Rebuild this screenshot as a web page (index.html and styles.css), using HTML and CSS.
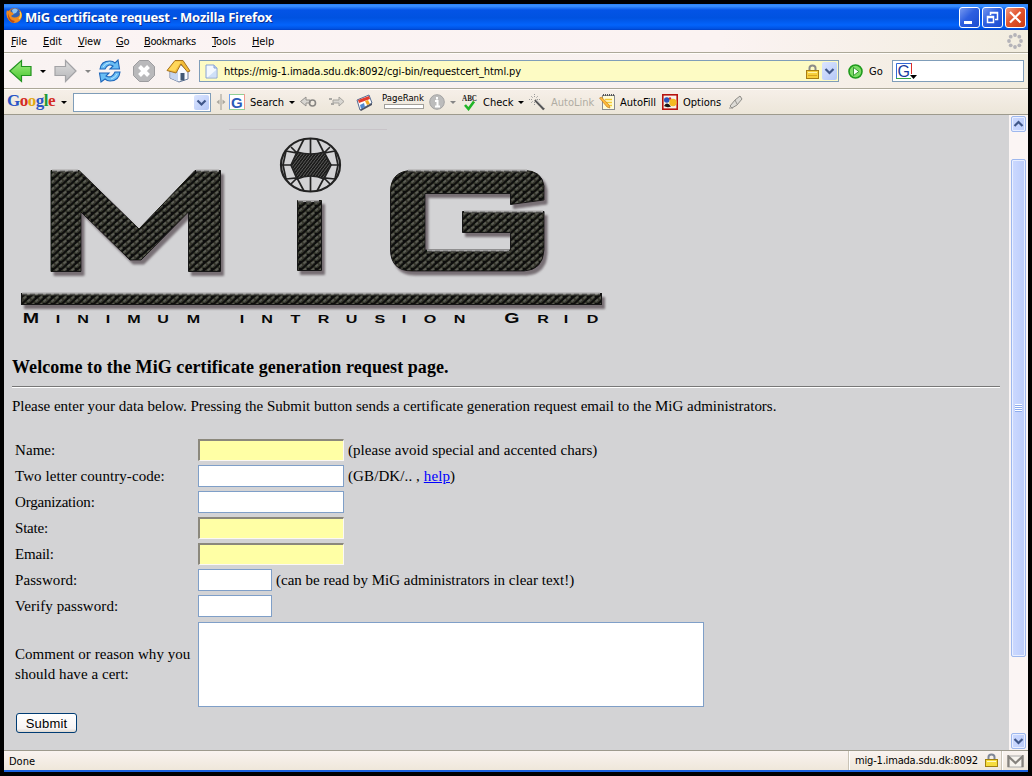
FILE: index.html
```html
<!DOCTYPE html>
<html lang="en">
<head>
<meta charset="utf-8">
<title>MiG certificate request - Mozilla Firefox</title>
<link rel="stylesheet" href="styles.css">
</head>
<body>
<div class="window">
  <header class="titlebar">
    <svg class="fox" width="17" height="17" viewBox="0 0 17 17"><circle cx="8.5" cy="8.5" r="7.5" fill="#e07820"/><circle cx="9" cy="6.6" r="5.4" fill="#2f62b5"/><path d="M6 3Q9 0 12 3L10 6L7 7Z" fill="#8fc4ee"/><path d="M1 3Q2 5 4 4Q7 6 8 7L5 9Q8 12 13 9Q15 6 13 2Q18 8 14 13Q8 18 3 13Q-1 9 1 3Z" fill="#f08a1d"/><path d="M2 6Q3 13 9 14L7 16Q1 13 2 6Z" fill="#b94b16"/><path d="M14 5Q16 9 13 12" stroke="#ffd34a" stroke-width="1.3" fill="none"/></svg>
    <span class="title-text">MiG certificate request - Mozilla Firefox</span>
    <div class="controls">
      <span class="ctl"><svg width="21" height="21"><rect x="5" y="14" width="8" height="3" fill="#fff"/></svg></span>
      <span class="ctl"><svg width="21" height="21"><path d="M8.5 8V5.5H15.5V12.5H13M8 6H16M5.5 9.5H11.500V15.500H5.500ZM5 10.500H12" fill="none" stroke="#fff" stroke-width="1.500"/></svg></span>
      <span class="ctl close"><svg width="21" height="21"><path d="M5 5L15.500 15.500M15.500 5L5 15.500" stroke="#fff" stroke-width="2.200"/></svg></span>
    </div>
  </header>

  <nav class="menubar">
    <span class="m-file"><u>F</u>ile</span><span class="m-edit"><u>E</u>dit</span><span class="m-view"><u>V</u>iew</span><span class="m-go"><u>G</u>o</span><span class="m-book"><u>B</u>ookmarks</span><span class="m-tools"><u>T</u>ools</span><span class="m-help"><u>H</u>elp</span>
    <svg class="throbber" width="16" height="16" viewBox="0 0 16 16"><g fill="#b4b3b8"><circle cx="8" cy="2" r="1.900"/><circle cx="12.300" cy="3.700" r="1.900"/><circle cx="14" cy="8" r="1.900"/><circle cx="12.300" cy="12.300" r="1.900"/><circle cx="8" cy="14" r="1.900"/><circle cx="3.700" cy="12.300" r="1.900"/><circle cx="2" cy="8" r="1.900"/><circle cx="3.700" cy="3.700" r="1.900"/></g></svg>
  </nav>

  <div class="navbar">
    <span class="n-back"><svg width="24" height="24"><defs><linearGradient id="gr" x2="0" y2="1"><stop offset="0" stop-color="#a5ee86"/><stop offset="1" stop-color="#42c529"/></linearGradient><linearGradient id="gy" x2="0" y2="1"><stop offset="0" stop-color="#dedede"/><stop offset="1" stop-color="#b5b5b8"/></linearGradient></defs><path d="M.8 12L12.500 1.500V7.500H22V16.500H12.500V22.500Z" fill="url(#gr)" stroke="#239320" stroke-width="1.200"/></svg></span>
    <span class="n-caret"><i class="caret"></i></span>
    <span class="n-fwd"><svg width="24" height="24"><path d="M22 12L11.500 1.500V7.500H1V16.500H11.500V22.500Z" fill="url(#gy)" stroke="#a3a3a6" stroke-width="1.200"/></svg></span>
    <span class="n-caret2"><i class="caret grey"></i></span>
    <span class="n-reload"><svg width="24" height="24"><g fill="#69bdf4" stroke="#1c65ba" stroke-width="1.100"><path d="M2 10Q3 2 12 2Q15 2 17 4L20 1L21.500 10H12L15 7Q10 4 7 10Z"/><path d="M22 13Q21 22 12 22Q9 22 7 20L3 23L1.500 14H11L8 17Q14 20 17 13Z"/></g><path d="M5 8Q7 4 12 3.500M19 15Q17 19 13 20" stroke="#b9e6ff" fill="none"/></svg></span>
    <span class="n-stop"><svg width="24" height="24"><path d="M7.500 1.500H16.500L22.500 7.500V16.500L16.500 22.500H7.500L1.500 16.500V7.500Z" fill="#b9b9bb" stroke="#9c9c9f"/><path d="M7.500 7.500L16.500 16.500M16.500 7.500L7.500 16.500" stroke="#fff" stroke-width="4"/></svg></span>
    <span class="n-home"><svg width="26" height="24"><path d="M4 12L14 5L22 12V20L13 23L4 19Z" fill="#f8faff" stroke="#6b7d9e"/><path d="M4.500 12L12 10V22.500L4.500 19Z" fill="#c6d5ee"/><path d="M1 11.500L9 1.500H17L24 12L21.500 13L15 5L10 14Z" fill="#f2bc38" stroke="#a6721e"/><path d="M9 2.500H15L9 12L2.500 11Z" fill="#ffd75b"/><rect x="14.500" y="14" width="4" height="7.500" fill="#415875"/></svg></span>
    <div class="urlbar">
      <svg class="page" width="13" height="15"><path d="M1 1H9L12 4V14H1Z" fill="#f3f8ff" stroke="#87a3d4"/><path d="M9 1V4H12" fill="#c2d3f0" stroke="#87a3d4"/><path d="M3 13L11 6V13Z" fill="#cfe0f8"/></svg>
      <span class="url">https://mig-1.imada.sdu.dk:8092/cgi-bin/requestcert_html.py</span>
      <svg width="13" height="15" class="lock"><path d="M3.500 7V4Q3.500 1.500 6.500 1.500T9.500 4V7" fill="none" stroke="#8b8b88" stroke-width="2"/><rect x=".5" y="6.500" width="12" height="8" fill="#f6cf3c" stroke="#a77c13"/><path d="M2 8.500H11" stroke="#fff2a4"/><path d="M2 11.500H11" stroke="#d9a51e"/></svg>
      <span class="drop"><svg width="15" height="18"><path d="M3.500 7L7.500 11L11.500 7" fill="none" stroke="#405789" stroke-width="2.200"/></svg></span>
    </div>
    <span class="n-goicon"><svg width="15" height="15"><circle cx="7.500" cy="7.500" r="6.500" fill="#7cdc67" stroke="#1f9a1c" stroke-width="1.600"/><path d="M5.500 3.500V11.500L10.800 7.500Z" fill="#fff" stroke="#168217" stroke-width=".8"/></svg></span>
    <span class="n-go">Go</span>
    <div class="searchbox"><svg width="24" height="20"><rect x="1.500" y="2" width="15" height="15" fill="#fff"/><path d="M1.500 17V2.500H16" fill="none" stroke="#3269d6"/><path d="M1 17.500H16" stroke="#34a642"/><path d="M16.500 2V13" stroke="#dd2f2a"/><text x="2.500" y="15.500" class="gletter">G</text><path d="M15 14H22L18.500 18Z" fill="#000"/></svg></div>
  </div>

  <div class="googlebar">
    <span class="g-logo"><b class="c-blue">G</b><b class="c-red">o</b><b class="c-yel">o</b><b class="c-blue">g</b><b class="c-grn">l</b><b class="c-red">e</b></span>
    <span class="g-c1"><i class="caret"></i></span>
    <div class="g-input"><span class="drop"><svg width="15" height="15"><path d="M3.500 5.500L7.500 9.500L11.500 5.500" fill="none" stroke="#405789" stroke-width="2.200"/></svg></span></div>
    <span class="g-handle"><svg width="10" height="16"><path d="M5 0V16" stroke="#9c9a91"/><path d="M3.500 5.500V10.500L.5 8ZM6.500 5.500V10.500L9.500 8Z" fill="#aaa79e"/></svg></span>
    <span class="g-g"><svg width="16" height="16"><rect x=".5" y=".5" width="15" height="15" fill="#fff" stroke="#8fcf95"/><path d="M.5 0V15" stroke="#6c9ff0"/><path d="M15.500 0V15" stroke="#f09a90"/><text x="2" y="14" class="gletter bold">G</text></svg></span>
    <span class="g-search txt">Search</span>
    <span class="g-c2"><i class="caret"></i></span>
    <span class="g-prev"><svg width="17" height="12"><path d="M.5 5.500L6 1V4H10V7H6V10Z" fill="#d8d6d1" stroke="#94928e"/><circle cx="12.500" cy="7" r="3" fill="none" stroke="#888683" stroke-width="1.600"/></svg></span>
    <span class="g-next"><svg width="17" height="12"><path d="M16 5.500L11 1V4H5V7H11V10Z" fill="#d8d6d1" stroke="#a5a39e"/><path d="M1 3H4M3 8H6" stroke="#aaa8a4" stroke-width="2"/></svg></span>
    <span class="g-news"><svg width="17" height="17"><path d="M1 6L13 1L16 9L4 16Z" fill="#fff" stroke="#546b92"/><path d="M2 6L13 2L14 5L3 9Z" fill="#e33b2c"/><path d="M4 11L8 9L9 13L5 15Z" fill="#5289cf"/><path d="M9 7L12 6L14 10L11 11Z" fill="#f2aa25"/><path d="M4 16L16 9V11L5 17Z" fill="#4c5361"/></svg></span>
    <span class="g-rank"><em>PageRank</em><i></i></span>
    <span class="g-info"><svg width="16" height="16"><circle cx="8" cy="8" r="7.300" fill="#bcbcbc" stroke="#a3a3a3"/><path d="M8 3V5.500M6 7H8.500V12M6 12.500H11" stroke="#fff" stroke-width="2" fill="none"/></svg></span>
    <span class="g-c3"><i class="caret grey"></i></span>
    <span class="g-abc"><svg width="17" height="17"><text x="0" y="6.500" class="abc" textLength="15" lengthAdjust="spacingAndGlyphs">ABC</text><path d="M3 11L6.500 15L12 7.500" fill="none" stroke="#20b527" stroke-width="2.600"/></svg></span>
    <span class="g-check txt">Check</span>
    <span class="g-c4"><i class="caret"></i></span>
    <span class="g-wand"><svg width="17" height="17"><path d="M6 6L15 15.500" stroke="#555" stroke-width="2.400"/><path d="M7 6L15 14" stroke="#aaa"/><path d="M5.500 0V3M5.500 8V11M0 5.500H3M8 5.500H11M2 2L4 4M9 2L7 4M2 9L4 7" stroke="#999" stroke-dasharray="1 1"/></svg></span>
    <span class="g-auto txt">AutoLink</span>
    <span class="g-fillicon"><svg width="17" height="17"><rect x="3.500" y="1.500" width="12" height="14" fill="#fffbd7" stroke="#888b91"/><path d="M4 1H16" stroke="#555" stroke-dasharray="1 1" stroke-width="2"/><path d="M6 5.500H13M7 8.500H13M8 11.500H13" stroke="#f2ca35" stroke-width="1.600"/><path d="M.5 4L2.500 3L10 11L11 14L8 13Z" fill="#ffb938" stroke="#bb731b" stroke-width=".6"/></svg></span>
    <span class="g-fill txt">AutoFill</span>
    <span class="g-opticon"><svg width="16" height="16"><rect x=".8" y=".8" width="14.400" height="14.400" fill="#f8f2ea" stroke="#b7130e" stroke-width="1.600"/><path d="M2 12Q5 7 9 12.500Q5 14 2 12Z" fill="#171717"/><circle cx="4.800" cy="6" r="2.800" fill="#2a55bc"/><circle cx="11" cy="8.500" r="3.700" fill="#f4bb22"/><circle cx="8" cy="4.500" r="1.200" fill="#dc321f"/></svg></span>
    <span class="g-opt txt">Options</span>
    <span class="g-pen"><svg width="16" height="15"><path d="M2 11L7 5L12 1L14 4L9 10L4 13Z" fill="#dddbd6" stroke="#8e8c87"/><path d="M7 5L9 9M1 13H5" stroke="#96948f"/></svg></span>
  </div>

  <div class="viewport">
    <main class="page-body">
      <svg class="logo" width="600" height="230" viewBox="12 115 600 230">
        <defs>
          <pattern id="weave" width="8" height="7" patternUnits="userSpaceOnUse" patternTransform="translate(51 170)"><rect width="8" height="7" fill="#0f100d"/><path d="M-2 8.500L4 3.500M2 5L10 -2M6 8.500L12 3.500" stroke="#33342c" stroke-width="3.200"/><path d="M.5 5.500L3 3.500M4.500 2.500L7 .5" stroke="#5c5d54" stroke-width="1.800"/></pattern>
          <pattern id="fine" width="3" height="4" patternUnits="userSpaceOnUse"><rect width="3" height="4" fill="#1d1d1c"/><path d="M0 4L3 0" stroke="#6b6b69" stroke-width=".8"/></pattern>
          <filter id="shade" x="-10%" y="-10%" width="125%" height="150%"><feDropShadow dx="3" dy="4" stdDeviation="1.300" flood-color="#60575b" flood-opacity=".8"/></filter>
        </defs>
        <path d="M229 129.500H387" stroke="#c8c3c8"/>
        <g filter="url(#shade)" fill="url(#weave)" stroke="#151512" stroke-width="1">
          <path d="M51 170.500H79L139 229L195 170.500H220.500V271.500H188.500V212L141 260H130L81 212V271.500H51Z"/>
          <path d="M297.500 200.500H321.500V270.500H297.500Z"/>
          <path d="M544 200V186Q542 170.500 524 170.500H412Q390.500 171 390.500 192V250Q391 271 412 271H524Q543 270 544 250V211.500H462.500V232.500H510.500V250H425V193.500H510.500V204.500Z"/>
          <rect x="21.500" y="293.500" width="580" height="11"/>
        </g>
        <path d="M52 170.500H78M196 170.500H219M298 201H319M408 170.500H527M464 211.500H543M427 250.500H509M22 293.500H600" stroke="#a9a8a8" stroke-width="2"/>
        <path d="M52 171.500H78M196 171.500H219M298 202H319M408 171.500H527M464 212.500H543M427 251.500H509M22 294.500H600" stroke="#4e4e4b" stroke-width="1.500" stroke-dasharray="5 3"/>
        <g stroke="#222" fill="none" stroke-width="1.700">
          <ellipse cx="310.500" cy="165" rx="29.500" ry="26.500" stroke-width="2.200"/>
          <path d="M310.500 138V192M281 165H340M304 139L297 153L286 151M317 139L324 153L335 151M304 191L297 178L286 179M317 191L324 178L335 179M286 151L283 165L286 179M335 151L338 165L335 179M291 147L297 153M330 147L324 153M291 184L297 178M330 184L324 178"/>
          <path d="M291 165L297 152Q311 156 324 152L331 165L324 179Q311 173 297 179Z" fill="url(#fine)"/>
        </g>
        <g class="tagline" transform="scale(1.400 1)">
          <text y="323" x="22.100 41.400 59.300 77.100 95.700 116.400 138.200 150 172.900 190.700 211.100 231.100 251.100 271.400 288.600 307.100 328.200 345 365.700 387.900 404.300 423.200"><tspan class="cap">M</tspan>INIMUM INTRUSION <tspan class="cap">G</tspan>RID</text>
        </g>
      </svg>
      <h3>Welcome to the MiG certificate generation request page.</h3>
      <hr>
      <p>Please enter your data below. Pressing the Submit button sends a certificate generation request email to the MiG administrators.</p>
      <form class="form">
        <label>Name:</label><div><input class="yellow"><span>(please avoid special and accented chars)</span></div>
        <label>Two letter country-code:</label><div><input><span class="code">(GB/DK/.. , <a href="#">help</a>)</span></div>
        <label class="tight">Organization:</label><div><input></div>
        <label class="tight">State:</label><div><input class="yellow"></div>
        <label class="tight">Email:</label><div><input class="yellow"></div>
        <label>Password:</label><div><input class="short" type="password"><span class="clear">(can be read by MiG administrators in clear text!)</span></div>
        <label>Verify password:</label><div><input class="short" type="password"></div>
        <label class="comment">Comment or reason why you<br>should have a cert:</label><textarea></textarea>
      </form>
      <button class="submit" type="button">Submit</button>
    </main>
    <div class="scrollbar">
      <span class="sb-btn"><svg width="15" height="16"><path d="M3.500 10L7.500 6L11.500 10" fill="none" stroke="#405789" stroke-width="2.200"/></svg></span>
      <span class="thumb"><i></i></span>
      <span class="sb-btn"><svg width="15" height="16"><path d="M3.500 6L7.500 10L11.500 6" fill="none" stroke="#405789" stroke-width="2.200"/></svg></span>
    </div>
  </div>

  <footer class="statusbar">
    <span class="done">Done</span>
    <span class="host"><span>mig-1.imada.sdu.dk:8092</span><svg width="13" height="15"><path d="M3.500 7V4Q3.500 1.500 6.500 1.500T9.500 4V7" fill="none" stroke="#7f8797" stroke-width="2"/><rect x=".5" y="6.500" width="12" height="7" fill="#f6dc3c" stroke="#a08010"/><path d="M2 8.500H11" stroke="#fffac0"/></svg></span>
    <span class="mail"><svg width="17" height="13"><rect x="1" y="1" width="15" height="11" fill="#f6f3ee" stroke="#aaa"/><path d="M1.500 12V1.500L8.500 8L15.500 1.500V12" fill="none" stroke="#85827d" stroke-width="2.200"/></svg></span>
  </footer>
</div>
</body>
</html>
```
FILE: styles.css
```css
* { box-sizing: border-box; }
body { margin: 0; background: #000; font: 11px/14px "DejaVu Sans Condensed", "DejaVu Sans", sans-serif; font-stretch: condensed; color: #000; overflow: hidden; }
svg { display: block; flex: none; }
.window { margin: 4px; width: 1024px; height: 768px; display: flex; flex-direction: column; border-bottom: 2px solid #1a62e0; background: #f7f1ec; }

.titlebar { height: 26px; flex: none; display: flex; align-items: center; padding: 0 2px; background: linear-gradient(#2a82f8 0, #3b91ff 2px, #0454e6 6px, #0052e0 14px, #0364fc 21px, #0050df 25px, #003cc0); }
.fox { margin: -1px 2px 2px 0; }
.title-text { font: bold 13px/20px "Open Sans", sans-serif; letter-spacing: -.2px; color: #fff; text-shadow: 1px 1px #0b2f92; white-space: nowrap; flex: 1; }
.controls { display: flex; gap: 2px; }
.ctl { width: 21px; height: 21px; border: 1px solid #fff; border-radius: 3px; background: linear-gradient(135deg, #7799f0, #2e5fe0 45%, #1b4cd0); }
.ctl svg { margin: -1px; }
.ctl.close { background: linear-gradient(135deg, #f29a80, #e2552e 45%, #c93c14); }

.menubar, .navbar, .googlebar { flex: none; display: flex; align-items: center; white-space: nowrap; }
.menubar { height: 23px; border-bottom: 1px solid #aca899; padding: 0 5px 0 7px; background: linear-gradient(90deg, #fbf4f4, #fbf3f2 70%, #f2eddf); }
.menubar span { flex: none; padding-top: 1px; letter-spacing: -.1px; }
.menubar u { text-underline-offset: 1px; }
.m-file { width: 32px; } .m-edit { width: 35px; } .m-view { width: 38px; } .m-go { width: 28px; }
.m-book { width: 68px; } .m-tools { width: 40px; }
.menubar .m-book { letter-spacing: -.4px; }
.throbber { margin-left: auto; }

.caret { display: block; width: 0; border: 3px solid transparent; border-top-color: #000; border-bottom: 0; }
.caret.grey { border-top-color: #858585; }

.navbar { height: 36px; border-bottom: 1px solid #aca899; border-top: 1px solid #fffdf9; padding-left: 5px; background: linear-gradient(90deg, #f9f3f2, #f8f1ef 70%, #f2ecdd); }
.navbar > span { flex: none; }
.n-back { width: 31px; } .n-caret { width: 14px; } .n-fwd { width: 31px; } .n-caret2 { width: 13px; }
.n-reload { width: 34px; } .n-stop { width: 34px; } .n-home { width: 33px; }
.urlbar { width: 640px; height: 22px; flex: none; border: 1px solid #7f9db9; background: #fdfbc4; display: flex; align-items: center; padding: 0 1px 0 5px; }
.url { flex: 1; padding: 2px 0 0 6px; letter-spacing: -.09px; }
.lock { margin-right: 3px; }
.drop { background: linear-gradient(135deg, #dbe5ff, #b5c8f7); border-radius: 2px; }
.n-goicon { margin-left: 9px; width: 21px; }
.n-go { width: 23px; padding-top: 2px; }
.searchbox { width: 132px; height: 22px; border: 1px solid #7f9db9; background: #fff; padding-left: 2px; }
.gletter { font: 16px "Liberation Sans", sans-serif; fill: #183a9e; }
.gletter.bold { font-weight: bold; font-size: 15px; fill: #2b5ab8; }

.googlebar { height: 26px; border-bottom: 1px solid #9d9a8d; border-top: 1px solid #fffdf9; padding-left: 3px; background: linear-gradient(#f6efe8, #ece6d9); }
.googlebar > span { flex: none; }
.googlebar .txt { padding-top: 2px; }
.g-logo { width: 54px; font: 17px/20px "Liberation Serif", serif; margin-top: -3px; letter-spacing: -.5px; }
.g-logo b { font-weight: bold; }
.c-blue { color: #2b55c6; } .c-red { color: #d42c23; } .c-yel { color: #e3a814; } .c-grn { color: #219a35; }
.g-c1 { width: 12px; }
.g-input { width: 138px; height: 19px; flex: none; border: 1px solid #7f9db9; background: #fff; display: flex; justify-content: flex-end; align-items: center; padding-right: 1px; }
.g-handle { margin-left: 5px; width: 13px; }
.g-g { width: 21px; } .g-search { width: 39px; } .g-c2 { width: 11px; } .g-prev { width: 28px; } .g-next { width: 28px; }
.g-news { width: 25px; } .g-rank { width: 48px; } .g-info { width: 21px; } .g-c3 { width: 12px; } .g-abc { width: 21px; }
.g-check { width: 35px; } .g-c4 { width: 11px; } .g-wand { width: 22px; } .g-auto { width: 48px; color: #b0ada3; }
.g-fillicon { width: 21px; } .g-fill { width: 42px; } .g-opticon { width: 21px; } .g-opt { width: 45px; }
.g-rank em { display: block; font: 9.500px/11px "DejaVu Sans Condensed", "DejaVu Sans", sans-serif; margin: -2px 0 0 1px; }
.g-rank i { display: block; width: 40px; height: 5px; border: 1px solid #a19f9a; background: #fff; margin: 1px 3px; }
.abc { font: bold 8px "Liberation Serif", serif; fill: #222; }

.viewport { height: 635px; flex: none; display: flex; background: #d3d3d5; }
.page-body { flex: 1; padding: 0 9px 0 8px; font: 15px/20px "Liberation Serif", "Times New Roman", serif; }
.tagline { font: bold 11.500px "Liberation Sans", sans-serif; text-anchor: middle; fill: #080808; }
.cap { font-size: 14px; }
h3 { margin: 12px 0 0; font-size: 18px; line-height: 21px; height: 20px; white-space: nowrap; letter-spacing: .075px; }
hr { margin: 9px 0 0; border: 0; height: 2px; border-top: 1px solid #777; border-bottom: 1px solid #fff; }
.page-body p { margin: 8px 0 0; white-space: nowrap; letter-spacing: -.015px; }
.form { margin: 21px 0 0 3px; display: grid; grid-template-columns: 183px 506px; grid-template-rows: repeat(7, 26px) 91px; align-items: center; }
.form label { white-space: nowrap; letter-spacing: .07px; }
.form .tight { letter-spacing: -.2px; }
.form .comment { margin-top: -2px; letter-spacing: .05px; }
.form div { display: flex; align-items: center; height: 26px; }
.form div span { margin: 0 0 0 4px; white-space: nowrap; letter-spacing: .06px; }
.form div .clear { letter-spacing: 0; }
.form div .code { letter-spacing: .1px; }
.form input, .form textarea { border: 1px solid #7f9fc8; background: #fff; padding: 0; margin: 0; width: 146px; height: 22px; }
.form input.short { width: 74px; }
.form input.yellow { background: #ffffa5; border: 2px solid; border-color: #8b887c #fbf8f5 #fbf8f5 #8b887c; border-width: 2px 1px 1px 2px; }
.form textarea { width: 506px; height: 85px; resize: none; }
a { color: #00f; }
.submit { display: block; width: 61px; height: 20px; margin: 3px 0 0 4px; padding: 0; border: 1px solid #003c74; border-radius: 3px; background: linear-gradient(#fff, #f7f4f4 80%, #ddd7cf); font: 13px/17px "Liberation Sans", sans-serif; letter-spacing: .2px; }

.scrollbar { width: 19px; padding: 1px 2px; background: #fbf5f4; display: flex; flex-direction: column; }
.sb-btn, .thumb { border: 1px solid #9eb8ee; border-radius: 2px; background: linear-gradient(90deg, #ccd9ff, #bccdfb); box-shadow: inset 0 0 0 1px #e9efff; }
.sb-btn { height: 16px; flex: none; }
.sb-btn svg { margin: -1px; }
.thumb { height: 498px; margin: 27px 0 76px; display: flex; align-items: center; justify-content: center; }
.thumb i { width: 7px; height: 8px; background: repeating-linear-gradient(#fff 0 1px, #8eacee 1px 2px); }

.statusbar { height: 20px; flex: none; border-top: 1px solid #9d9a8d; display: flex; align-items: stretch; line-height: 21px; background: linear-gradient(#f9f3f0, #efe7da); }
.done { flex: 1; padding-left: 5px; }
.host { width: 153px; border-left: 1px solid #c9c3b6; box-shadow: inset 1px 0 #fff; padding-left: 6px; display: flex; align-items: center; }
.host span { flex: 1; white-space: nowrap; letter-spacing: -.18px; }
.host svg { margin-right: 3px; }
.mail { width: 27px; border-left: 1px solid #c9c3b6; box-shadow: inset 1px 0 #fff; padding: 4px 0 0 5px; }
```
